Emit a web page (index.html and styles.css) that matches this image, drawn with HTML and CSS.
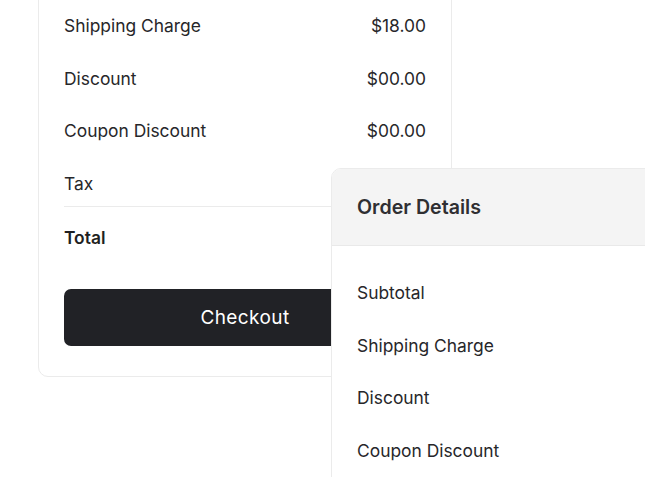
FILE: index.html
```html
<!DOCTYPE html>
<html lang="en">
<head>
<meta charset="utf-8">
<title>Order Details</title>
<link rel="stylesheet" href="styles.css">
</head>
<body>
<div class="stage">
  <section class="card card-main">
    <div class="card-body card-body-main">
      <ul class="rows">
        <li class="row"><span>Shipping Charge</span><span>$18.00</span></li>
        <li class="row"><span>Discount</span><span>$00.00</span></li>
        <li class="row"><span>Coupon Discount</span><span>$00.00</span></li>
        <li class="row"><span>Tax</span></li>
      </ul>
      <div class="total"><span>Total</span></div>
      <button class="checkout" type="button">Checkout</button>
    </div>
  </section>

  <section class="card card-float">
    <header class="card-head">Order Details</header>
    <div class="card-body">
      <ul class="rows">
        <li class="row"><span>Subtotal</span></li>
        <li class="row"><span>Shipping Charge</span></li>
        <li class="row"><span>Discount</span></li>
        <li class="row"><span>Coupon Discount</span></li>
      </ul>
    </div>
  </section>
</div>
</body>
</html>
```

FILE: styles.css
```css
* { box-sizing: border-box; }

html, body {
  margin: 0;
  padding: 0;
  background: #ffffff;
  overflow: hidden;
}

body {
  font-family: Inter, "Open Sans", "Liberation Sans", sans-serif;
  color: #27272a;
  font-size: 17.4px;
}

.stage {
  position: relative;
  display: flow-root;
  height: 477px;
  overflow: hidden;
}

.card {
  width: 414px;
  background: #ffffff;
  border: 1px solid #ebebeb;
  border-radius: 10px;
  overflow: hidden;
}

.card-main {
  margin-left: 38px;
  margin-top: -20px;
}

.card-float {
  position: absolute;
  left: 331px;
  top: 168px;
  height: 360px;
}

.card-head {
  height: 77px;
  display: flex;
  align-items: center;
  padding: 0 25px;
  background: #f4f4f4;
  border-bottom: 1px solid #e9e9e9;
  font-size: 19.6px;
  font-weight: 600;
  color: #2f2f32;
}

.card-body {
  padding: 35px 25px 30px;
}

.card-body-main {
  padding-top: 33px;
}

.rows {
  list-style: none;
  margin: 0;
  padding: 0 0 10px;
  display: flex;
  flex-direction: column;
  gap: 28.6px;
}

.row, .total {
  display: flex;
  justify-content: space-between;
  line-height: 24px;
}

.total {
  border-top: 1px solid #ebebeb;
  padding-top: 19px;
  font-weight: 600;
  color: #1f1f22;
}

.checkout {
  display: block;
  width: 100%;
  height: 57px;
  margin-top: 39px;
  border: 0;
  border-radius: 7px;
  background: #212226;
  color: #ffffff;
  font-family: inherit;
  font-size: 19px;
  font-weight: 400;
  letter-spacing: 0.4px;
}
```
